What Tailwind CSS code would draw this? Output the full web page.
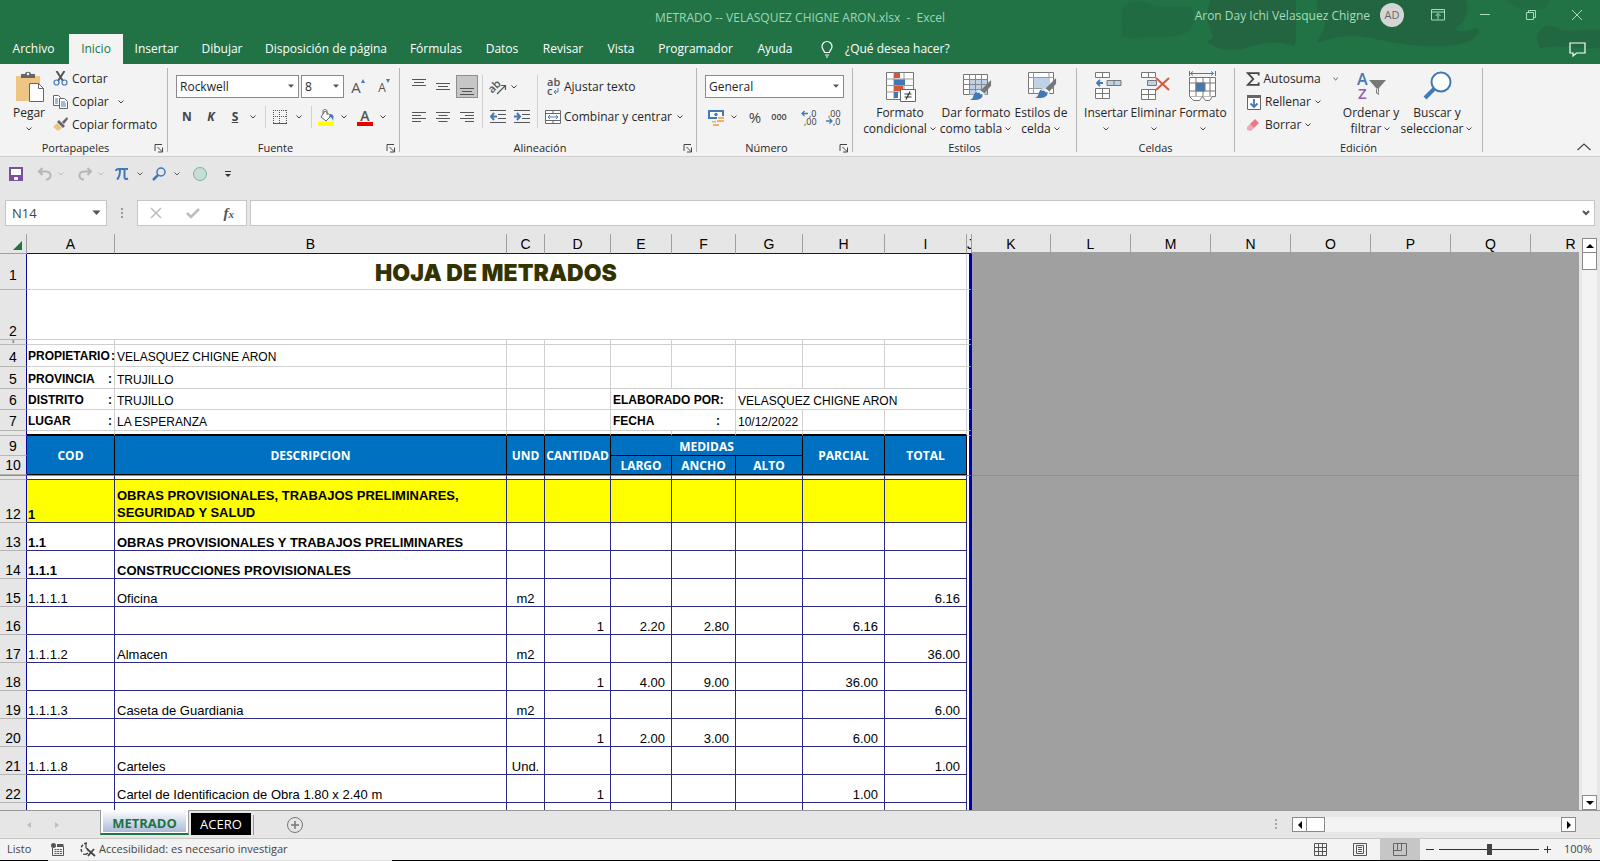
<!DOCTYPE html>
<html lang="es">
<head>
<meta charset="utf-8">
<meta name="viewport" content="width=device-width, initial-scale=1">
<title>METRADO -- VELASQUEZ CHIGNE ARON.xlsx - Excel</title>
<script src="https://cdn.jsdelivr.net/npm/@tailwindcss/browser@4"></script>
</head>
<body class="flex h-screen flex-col overflow-hidden bg-[#e6e6e6] font-['Open_Sans','Noto_Sans',sans-serif] text-[12px] text-[#262626]">

<svg class="hidden" aria-hidden="true">
  <symbol id="chev" viewBox="0 0 8 8"><path d="M1.500 2.500 4 5l2.500-2.500" fill="none" stroke="currentColor" stroke-width="1" opacity=".85"/></symbol>
  <symbol id="tri" viewBox="0 0 8 8"><path d="M1 2.500h6L4 5.800z" fill="currentColor"/></symbol>
  <symbol id="launch" viewBox="0 0 10 10"><path d="M1 8V1.500h7M3.500 4 8 8.500M8.500 4.500v4.500H4" fill="none" stroke="#444"/></symbol>
  <symbol id="brush" viewBox="0 0 24 24"><path d="M23 1v6l-7 8-4-3z" fill="#777"/><path d="M12 12l4 3c1 5-3 8-11 8-2 0-3-1-4-1 4-1 3-3 4-6 1-4 4-5 7-4z" fill="#f3f3f3"/><path d="M11 13l3 3c1 4-3 6-9 6-2 0-3 0-4-.500 4-1 3-3 4-5 1-3 3-4 6-3.500z" fill="#4179b5"/><path d="M8 14c2-1 4-1 5 2" stroke="#f3f3f3" stroke-width="1.500" fill="none"/></symbol>
</svg>

<!-- Title bar and ribbon tabs -->
<header class="relative flex h-16 shrink-0 flex-col bg-[#217346] text-white">
  <svg class="absolute right-0 top-0 h-16 w-[490px]" viewBox="0 0 490 64" aria-hidden="true">
    <g fill="#22633f"><path d="M14 6c10-8 24-4 32 0h34c6 10 4 20-2 26-16 8-34 4-50 6-8 2-14-2-17-2 4-8-3-20 3-30z" opacity=".5"/><path d="M100 0h86v40c0 4-2 6-2 7-14-8-30-4-46 0-14 6-34 2-41-6 8-2 6-6 3-12-4-10-3-20 0-29z" opacity=".85"/><path d="M208 0h148c4 12-2 24-12 30 8 2 14 2 22-2 8 2-2 14-16 16-30 6-60 0-90-6-20-4-32-2-53 5 2-10 12-14 6-24-6-6-8-12-5-19z" opacity=".8"/><path d="M395 0h44c2 8-6 8-12 10-10 0-26-2-32-10z" opacity=".4"/><path d="M428 32c8-10 18-6 22-2 14 2 30-2 40 0v18c-18 2-34-4-58 0-6-2-6-10-4-16z" opacity=".7"/></g>
  </svg>
  <div class="relative flex h-[34px] items-center">
    <div class="flex-1"></div>
    <h1 class="whitespace-pre pt-0.5 text-[12px] font-normal text-[#9fd5b7]">METRADO -- VELASQUEZ CHIGNE ARON.xlsx  -  Excel</h1>
    <div class="flex h-[30px] flex-1 items-center justify-end self-start text-[#a8dcbd]">
      <span class="mr-2.5 pt-0.5 text-[12px]">Aron Day Ichi Velasquez Chigne</span>
      <button class="mr-[10px] size-6 rounded-full bg-[#d5d5d5] text-[11px] text-[#666]">AD</button>
      <button class="grid w-12 place-items-center" aria-label="Opciones de la cinta"><svg class="h-3 w-[14px]" viewBox="0 0 14 12" fill="none" stroke="currentColor"><path d="M.5.5h13v10.500H.5zM.5 3h13M7 10V4.500M4.500 7 7 4.500 9.500 7"/></svg></button>
      <button class="grid w-[46px] place-items-center" aria-label="Minimizar"><svg class="h-3 w-3" viewBox="0 0 12 12" stroke="currentColor"><path d="M1 5.500h10"/></svg></button>
      <button class="grid w-[46px] place-items-center" aria-label="Restaurar"><svg class="h-3 w-3" viewBox="0 0 12 12" fill="none" stroke="currentColor"><path d="M1.500 3.500h7v7h-7zM3.500 3V1.500h7v7H9"/></svg></button>
      <button class="grid w-[46px] place-items-center" aria-label="Cerrar"><svg class="h-3 w-3" viewBox="0 0 12 12" stroke="currentColor"><path d="m1 1 10 10M11 1 1 11"/></svg></button>
    </div>
  </div>
  <nav class="relative flex h-[30px] items-stretch text-[12px] [&>button]:shrink-0 [&>button]:whitespace-nowrap">
    <button class="w-[67px]">Archivo</button>
    <button class="ml-0.5 w-[54px] bg-[#f3f3f3] text-[#217346]">Inicio</button>
    <button class="w-[67px]">Insertar</button>
    <button class="w-16">Dibujar</button>
    <button class="w-36">Disposición de página</button>
    <button class="w-[76px]">Fórmulas</button>
    <button class="w-14">Datos</button>
    <button class="w-[66px]">Revisar</button>
    <button class="w-[50px]">Vista</button>
    <button class="w-[99px]">Programador</button>
    <button class="w-[60px]">Ayuda</button>
    <button class="flex items-center gap-3 pl-4"><svg class="h-[18px] w-3" viewBox="0 0 12 18" fill="none" stroke="currentColor" stroke-width="1.200"><path d="M3.500 12.500c0-2-2.500-3-2.500-6a5 5 0 0 1 10 0c0 3-2.500 4-2.500 6zM4 15h4M5 17h2"/></svg>¿Qué desea hacer?</button>
    <button class="ml-auto grid w-[46px] place-items-center" aria-label="Comentarios"><svg class="h-[15px] w-[17px]" viewBox="0 0 17 15" fill="none" stroke="currentColor" stroke-width="1.200"><path d="M1 1h15v10H7.500L4 14v-3H1z"/></svg></button>
  </nav>
</header>

<!-- Ribbon -->
<section class="flex h-[93px] shrink-0 border-b border-[#cfcfcf] bg-[#f3f3f3] [&_button]:shrink-0 [&_button]:whitespace-nowrap">
  <div class="flex w-[167px] shrink-0 flex-col">
    <div class="flex h-[76px] pt-[3px]">
      <button class="ml-3 flex w-[34px] flex-col items-center pt-1">
        <svg class="h-8 w-8 shrink-0" viewBox="0 0 32 32"><path d="M3 5h24v25H3z" fill="#eec583"/><path d="M8 3h4c0-3 6-3 6 0h4v4H8z" fill="#666"/><circle cx="15" cy="3" r="1.300" fill="#f3f3f3"/><path d="M16.500 12.500h9l5 5v13h-14z" fill="#fff" stroke="#666"/><path d="M25.500 12.500v5h5" fill="none" stroke="#666"/></svg>
        <span class="leading-[20px]">Pegar</span>
        <svg class="mt-0.5 size-2"><use href="#chev"/></svg>
      </button>
      <div class="ml-[7px] flex flex-col [&>button]:flex [&>button]:h-[23px] [&>button]:items-center [&>button]:gap-1">
        <button><svg class="size-[15px]" viewBox="0 0 15 15" fill="none"><path d="M3.500 0 10 10M11.500 0 5 10" stroke="#555" stroke-width="2"/><circle cx="3.500" cy="11.500" r="2.500" stroke="#4179b5" stroke-width="1.200"/><circle cx="11.500" cy="11.500" r="2.500" stroke="#4179b5" stroke-width="1.200"/></svg>Cortar</button>
        <button><svg class="size-[15px]" viewBox="0 0 15 15" fill="#fff" stroke="#666"><path d="M.5 1.500h5l2 2v8h-7z"/><path d="M2 5h3M2 7h3M2 9h3" stroke="#4179b5"/><path d="M6.500 4.500h5l3 3v7h-8z"/><path d="M8 8h4M8 10h5M8 12h5" stroke="#4179b5"/></svg>Copiar<svg class="ml-1 size-2"><use href="#chev"/></svg></button>
        <button><svg class="size-[15px]" viewBox="0 0 15 15"><path d="M14 0 9 5l2 2 4-5z" fill="#666"/><path d="m6 3 6 6-2 2-6-6z" fill="#666"/><path d="m4 6 5 5-4 3-5-4z" fill="#eec583"/></svg>Copiar formato</button>
      </div>
    </div>
    <div class="flex h-4 items-center"><span class="flex-1 text-center text-[11px]">Portapapeles</span><button class="grid w-4 place-items-center" aria-label="Opciones de portapapeles"><svg class="size-2.5"><use href="#launch"/></svg></button></div>
  </div>
  <div class="my-1 w-px shrink-0 bg-[#b5b5b5]"></div>

  <div class="flex w-[231px] shrink-0 flex-col">
    <div class="flex h-[76px] flex-col gap-2 pt-[11px]">
      <div class="flex h-[23px] gap-0.5 pl-2">
        <div class="relative w-[123px] border border-[#8a8a8a] bg-white"><select aria-label="Fuente" class="size-full appearance-none pl-[3px] text-[12px] leading-none"><option>Rockwell</option></select><svg class="pointer-events-none absolute right-[3px] top-1.5 size-2 text-[#555]"><use href="#tri"/></svg></div>
        <div class="relative w-[43px] border border-[#8a8a8a] bg-white"><select aria-label="Tamaño" class="size-full appearance-none pl-[3px] text-[12px] leading-none"><option>8</option></select><svg class="pointer-events-none absolute right-[3px] top-1.5 size-2 text-[#555]"><use href="#tri"/></svg></div>
        <button class="flex w-6 items-start justify-center pt-0.5" aria-label="Aumentar tamaño"><span class="text-[15px] leading-5 text-[#555]">A</span><svg class="mt-0.5 size-1" viewBox="0 0 4 4"><path d="M0 4h4L2 0z" fill="#4179b5"/></svg></button>
        <button class="flex w-6 items-start justify-center pt-0.5" aria-label="Disminuir tamaño"><span class="pt-px text-[12px] leading-5 text-[#555]">A</span><svg class="mt-0.5 size-1" viewBox="0 0 4 4"><path d="M0 0h4L2 4z" fill="#4179b5"/></svg></button>
      </div>
      <div class="flex h-[22px] items-center pl-[7px] [&>button]:grid [&>button]:h-full [&>button]:place-items-center">
        <button class="w-6 font-bold text-[#444]">N</button>
        <button class="w-6 font-bold italic text-[#444]">K</button>
        <button class="w-6 font-bold text-[#444] underline">S</button>
        <button class="w-3" aria-label="Más subrayado"><svg class="size-2"><use href="#chev"/></svg></button>
        <i class="mx-1.5 h-full w-px bg-[#d0d0d0]"></i>
        <button class="w-4" aria-label="Bordes"><svg class="size-[14px]" viewBox="0 0 14 14" fill="none" stroke="#555"><path d="M.5 0v13M13.500 0v13M6.500 0v13M0 .5h14M0 6.500h14" stroke-dasharray="1 1"/><path d="M0 13.500h14"/></svg></button>
        <button class="w-[22px]" aria-label="Más bordes"><svg class="size-2"><use href="#chev"/></svg></button>
        <i class="mx-px h-full w-px bg-[#d0d0d0]"></i>
        <button class="ml-1 w-[18px]" aria-label="Color de relleno"><svg class="h-[17px] w-[17px]" viewBox="0 0 17 17"><path d="M0 12.500h16V17H0z" fill="#ff0"/><path d="m7 2 6 5-5 5-5-4z" fill="#fff" stroke="#666"/><path d="M5 5V2c0-2 4-2 4 0v4" fill="none" stroke="#666"/><path d="M12 5c4 0 4 3 3 7-1-3-1-4-4-4z" fill="#4179b5"/></svg></button>
        <button class="w-[18px]" aria-label="Más rellenos"><svg class="size-2"><use href="#chev"/></svg></button>
        <button class="w-6" aria-label="Color de fuente"><span class="flex w-4 flex-col items-center border-b-4 border-[#e60000] text-[14px] leading-[13px] font-semibold text-[#555]">A</span></button>
        <button class="w-3" aria-label="Más colores"><svg class="size-2"><use href="#chev"/></svg></button>
      </div>
    </div>
    <div class="flex h-4 items-center"><span class="flex-1 text-center text-[11px]">Fuente</span><button class="grid w-4 place-items-center" aria-label="Opciones de fuente"><svg class="size-2.5"><use href="#launch"/></svg></button></div>
  </div>
  <div class="my-1 w-px shrink-0 bg-[#b5b5b5]"></div>

  <div class="flex w-[296px] shrink-0 flex-col">
    <div class="flex h-[76px] pt-[11px]">
      <div class="grid h-[53px] grid-cols-3 grid-rows-[23px_22px] gap-x-0.5 gap-y-2 pl-2 [&>button]:grid [&>button]:w-[22px] [&>button]:place-items-center [&_svg]:h-[22px] [&_svg]:w-[14px] [&_svg]:stroke-[#555]">
        <button aria-label="Alinear arriba"><svg viewBox="0 0 14 22"><path d="M0 3.500h14M2 6.500h10M0 9.500h14"/></svg></button>
        <button aria-label="Alinear al medio"><svg viewBox="0 0 14 22"><path d="M0 7.500h14M2 10.500h10M0 13.500h14"/></svg></button>
        <button class="border border-[#8f8f8f] bg-[#c6c6c6]" aria-label="Alinear abajo"><svg viewBox="0 0 14 22"><path d="M0 12.500h14M2 15.500h10M0 18.500h14"/></svg></button>
        <button aria-label="Izquierda"><svg viewBox="0 0 14 22"><path d="M0 6.500h14M0 9.500h9M0 12.500h14M0 15.500h9"/></svg></button>
        <button aria-label="Centrar"><svg viewBox="0 0 14 22"><path d="M0 6.500h14M2.500 9.500h9M0 12.500h14M2.500 15.500h9"/></svg></button>
        <button aria-label="Derecha"><svg viewBox="0 0 14 22"><path d="M0 6.500h14M5 9.500h9M0 12.500h14M5 15.500h9"/></svg></button>
      </div>
      <i class="ml-1 h-[53px] w-px bg-[#d0d0d0]"></i>
      <div class="flex w-[54px] flex-col gap-2">
        <div class="flex h-[23px] items-center pl-[7px]">
          <button aria-label="Orientación"><svg class="size-4 overflow-visible" viewBox="0 0 16 16"><text x="-1" y="11" font-size="11" font-weight="600" fill="#555" transform="rotate(-45 5 9)">ab</text><path d="m7 15 8-8M11 6.500h4.500V11" fill="none" stroke="#555" stroke-width="1.200"/></svg></button>
          <button class="grid w-4 place-items-center" aria-label="Más orientación"><svg class="size-2"><use href="#chev"/></svg></button>
        </div>
        <div class="flex h-[22px] items-center pl-[3px] [&>button]:grid [&>button]:w-6 [&>button]:place-items-center">
          <button aria-label="Disminuir sangría"><svg class="h-[14px] w-4" viewBox="0 0 16 14"><path d="M0 .5h16M8 4.500h8M8 8.500h8M0 12.500h16" stroke="#555"/><path d="M7 6.500H2M4 3 1 6.500 4 10" fill="none" stroke="#4179b5" stroke-width="2"/></svg></button>
          <button aria-label="Aumentar sangría"><svg class="h-[14px] w-4" viewBox="0 0 16 14"><path d="M0 .5h16M8 4.500h8M8 8.500h8M0 12.500h16" stroke="#555"/><path d="M0 6.500h5M3 3l3 3.500L3 10" fill="none" stroke="#4179b5" stroke-width="2"/></svg></button>
        </div>
      </div>
      <i class="h-[53px] w-px bg-[#d0d0d0]"></i>
      <div class="flex flex-col gap-2 pl-[7px]">
        <button class="flex h-[23px] items-center gap-[3px]"><svg class="size-4 overflow-visible" viewBox="0 0 16 16"><text x="2" y="7" font-size="11" font-weight="600" fill="#555">ab</text><text x="2" y="16" font-size="11" font-weight="600" fill="#555">c</text><path d="M13 9v4H9M11 11l-2 2 2 2" fill="none" stroke="#4179b5"/></svg>Ajustar texto</button>
        <div class="flex h-[22px] items-center">
          <button class="flex w-[127px] items-center gap-[3px]"><svg class="size-4" viewBox="0 0 16 16" fill="#fff" stroke="#666"><path d="M.5 1.500h15v13H.5zM.5 4.500h15M.5 11.500h15M8 1.500v3M8 11.500v3"/><path d="M3 8h10M5 6 3 8l2 2M11 6l2 2-2 2" fill="none" stroke="#4179b5"/></svg>Combinar y centrar</button>
          <button class="grid w-4 place-items-center" aria-label="Más combinar"><svg class="size-2"><use href="#chev"/></svg></button>
        </div>
      </div>
    </div>
    <div class="flex h-4 items-center"><span class="flex-1 text-center text-[11px]">Alineación</span><button class="grid w-4 place-items-center" aria-label="Opciones de alineación"><svg class="size-2.5"><use href="#launch"/></svg></button></div>
  </div>
  <div class="my-1 w-px shrink-0 bg-[#b5b5b5]"></div>

  <div class="flex w-[155px] shrink-0 flex-col">
    <div class="flex h-[76px] flex-col gap-2 px-2 pt-[11px]">
      <div class="relative h-[23px] border border-[#8a8a8a] bg-white"><select aria-label="Formato de número" class="size-full appearance-none pl-[3px] text-[12px] leading-none"><option>General</option></select><svg class="pointer-events-none absolute right-[3px] top-1.5 size-2 text-[#555]"><use href="#tri"/></svg></div>
      <div class="flex h-[22px] items-center pl-[3px] [&>button]:grid [&>button]:h-full [&>button]:place-items-center">
        <button class="w-[17px]" aria-label="Moneda"><svg class="h-[17px] w-[17px]" viewBox="0 0 17 17"><path d="M1 2h14v7H1z" fill="#fff" stroke="#4179b5" stroke-width="2"/><circle cx="8" cy="5.500" r="1.700" fill="#4179b5"/><path d="M9 7h8v10H4v-6h5z" fill="#f3f3f3"/><path d="M10 8h6v2h-6zM9 11h7v2H9zM4 12h4v1.500H4zM5 15h6v2H5z" fill="#eeb36a"/></svg></button>
        <button class="w-[18px]" aria-label="Más monedas"><svg class="size-2"><use href="#chev"/></svg></button>
        <button class="w-6 text-[15px] text-[#444]">%</button>
        <button class="w-6 text-[9px] font-semibold text-[#444]">000</button>
        <i class="mx-px h-full w-px bg-[#d0d0d0]"></i>
        <button class="ml-1 w-6" aria-label="Aumentar decimales"><svg class="h-[15px] w-[15px] overflow-visible" viewBox="0 0 15 15"><text x="7" y="7" font-size="9" fill="#333">,0</text><text x="2" y="15" font-size="9" fill="#333">,00</text><path d="M6 3.500H0M2.500 1 0 3.500 2.500 6" fill="none" stroke="#4179b5" stroke-width="1.300"/></svg></button>
        <button class="w-6" aria-label="Disminuir decimales"><svg class="h-[15px] w-[15px] overflow-visible" viewBox="0 0 15 15"><text x="2" y="7" font-size="9" fill="#333">,00</text><text x="7" y="15" font-size="9" fill="#333">,0</text><path d="M0 11h6M3.500 8.500 6 11l-2.500 2.500" fill="none" stroke="#4179b5" stroke-width="1.300"/></svg></button>
      </div>
    </div>
    <div class="flex h-4 items-center"><span class="flex-1 text-center text-[11px]">Número</span><button class="grid w-4 place-items-center" aria-label="Opciones de número"><svg class="size-2.5"><use href="#launch"/></svg></button></div>
  </div>
  <div class="my-1 w-px shrink-0 bg-[#b5b5b5]"></div>

  <div class="flex w-[223px] shrink-0 flex-col">
    <div class="flex h-[76px] pl-2 pt-[7px] leading-4 [&>button]:flex [&>button]:flex-col [&>button]:items-center [&>button>svg]:mb-0.5 [&>button>svg]:size-8 [&>button>svg]:shrink-0 [&_span]:flex [&_span]:items-center [&_span]:gap-0.5">
      <button class="w-[78px]"><svg viewBox="0 0 32 32"><path d="M2.500 1.500h27v27h-27z" fill="#fff" stroke="#777"/><path d="M2.500 8h27M2.500 14.500h27M2.500 21h27M10 1.500v27M20 1.500v27" stroke="#999"/><path d="M10 2h6v5h-6zM10 15h9v5h-9z" fill="#d65532"/><path d="M10 8.500h11v5.500H10zM10 21h4v6h-4z" fill="#4179b5"/><path d="M16.500 18.500h15v12h-15z" fill="#fff" stroke="#666"/><path d="M20.500 23h7M20.500 26h7M26 20.500l-4 8" stroke="#333" stroke-width="1.200"/></svg>Formato<span>condicional<svg class="size-2"><use href="#chev"/></svg></span></button>
      <button class="w-[74px]"><svg viewBox="0 0 32 32"><path d="M3.500 3.500h24v20h-24z" fill="#fff" stroke="#777"/><path d="M9 8.500h18v15H9z" fill="#bfd1e6"/><path d="M3.500 8.500h24M3.500 13.500h24M3.500 18.500h24M9.500 3.500v20M15.500 3.500v20M21.500 3.500v20" stroke="#888"/><use href="#brush" x="9" y="8" width="23" height="23"/></svg>Dar formato<span>como tabla<svg class="size-2"><use href="#chev"/></svg></span></button>
      <button class="w-[56px]"><svg viewBox="0 0 32 32"><path d="M3.500 1.500h25v21h-25z" fill="#fff" stroke="#777"/><path d="M3.500 6.500h25M3.500 17.500h25M8.500 1.500v21M24 1.500v21" stroke="#999"/><path d="M9 7h15v10H9z" fill="#bfd1e6"/><use href="#brush" x="9" y="6" width="23" height="23"/></svg>Estilos de<span>celda<svg class="size-2"><use href="#chev"/></svg></span></button>
    </div>
    <div class="h-4 text-center text-[11px] leading-4">Estilos</div>
  </div>
  <div class="my-1 w-px shrink-0 bg-[#b5b5b5]"></div>

  <div class="flex w-[157px] shrink-0 flex-col">
    <div class="flex h-[76px] pl-1.5 pt-[7px] leading-4 [&>button]:flex [&>button]:flex-col [&>button]:items-center [&>button>svg]:shrink-0">
      <button class="w-[46px]"><svg class="mb-0.5 size-8" viewBox="0 0 32 32" fill="#fff" stroke="#777"><path d="M5.500 1.500h14v5h-14zM12.500 1.500v5M5.500 17.500h14v10h-14zM12.500 17.500v10M5.500 22.500h14"/><path d="M17 9.500h14v5H17zM24 9.500v5" fill="#bfd1e6"/><path d="M13 12H7M10 9l-3 3 3 3" fill="none" stroke="#4179b5" stroke-width="1.800"/></svg>Insertar<svg class="mt-1 size-2"><use href="#chev"/></svg></button>
      <button class="w-[49px]"><svg class="mb-0.5 size-8" viewBox="0 0 32 32" fill="#fff" stroke="#777"><path d="M3.500 1.500h14v5h-14zM10.500 1.500v5M3.500 18.500h14v10h-14zM10.500 18.500v10M3.500 23.500h14"/><path d="M9.500 9.500h9v5h-9z" fill="#bfd1e6"/><path d="m18 7 13 12M31 7 18 19" fill="none" stroke="#d9573c" stroke-width="2"/></svg>Eliminar<svg class="mt-1 size-2"><use href="#chev"/></svg></button>
      <button class="w-[50px]"><svg class="mb-0.5 size-8" viewBox="0 0 32 32" fill="#fff" stroke="#777"><path d="M2.500 6.500h26v19h-26z"/><path d="M2.500 12h26M2.500 20h26M9 6.500v19M16 6.500v19M23 6.500v19"/><path d="M9 12h9v8H9z" fill="#4179b5"/><path d="m2.500 25.500 4 4h6l3-4 3 4h4l3-4"/><path d="M2.500 0v5M28.500 0v5M3 2.500h24M6 .5l-2.500 2L6 4.500M24 .5l2.500 2-2.500 2" fill="none" stroke="#4179b5"/></svg>Formato<svg class="mt-1 size-2"><use href="#chev"/></svg></button>
    </div>
    <div class="h-4 text-center text-[11px] leading-4">Celdas</div>
  </div>
  <div class="my-1 w-px shrink-0 bg-[#b5b5b5]"></div>

  <div class="flex w-[247px] shrink-0 flex-col">
    <div class="flex h-[76px]">
      <div class="flex w-[104px] flex-col pl-[11px] pt-[3px] [&>button]:flex [&>button]:h-[23px] [&>button]:items-center [&>button]:gap-[3px]">
        <button><svg class="size-4" viewBox="0 0 16 16"><path d="M14 4V1.500H2L8 8l-6 6.500h12V12" fill="none" stroke="#444" stroke-width="2"/></svg>Autosuma<svg class="ml-2 size-2"><use href="#chev"/></svg></button>
        <button><svg class="size-4" viewBox="0 0 16 16"><path d="M1.500 1.500h13v14h-13z" fill="#fff" stroke="#666"/><path d="M1 1h14v3H1z" fill="#666"/><path d="M8 5v8M4.500 9.500 8 13l3.500-3.500" fill="none" stroke="#4179b5" stroke-width="1.800"/></svg>Rellenar<svg class="size-2"><use href="#chev"/></svg></button>
        <button><svg class="size-4" viewBox="0 0 16 16"><path d="m9 2 4 4-5 5-4-4z" fill="#e8788a"/><path d="m4 7 4 4-3 3-4-1v-3z" fill="#e8788a" opacity=".6"/></svg>Borrar<svg class="size-2"><use href="#chev"/></svg></button>
      </div>
      <div class="flex pt-[7px] leading-4 [&>button]:flex [&>button]:flex-col [&>button]:items-center [&>button>svg]:mb-0.5 [&>button>svg]:size-8 [&>button>svg]:shrink-0 [&_span]:flex [&_span]:items-center [&_span]:gap-0.5">
        <button class="w-16"><svg class="overflow-visible" viewBox="0 0 32 32"><text x="2" y="14" font-size="16" font-weight="600" fill="#4179b5">A</text><text x="3" y="28" font-size="15" font-weight="600" fill="#9160b0">Z</text><path d="M14 9h17l-7 8v7l-3-2v-5z" fill="#777"/><path d="m22 17 1 5" stroke="#fff"/></svg>Ordenar y<span>filtrar<svg class="size-2"><use href="#chev"/></svg></span></button>
        <button class="w-[68px]"><svg viewBox="0 0 32 32" fill="none" stroke="#4179b5"><circle cx="20" cy="11" r="9.500" stroke-width="2" fill="#fff"/><path d="M13 18 4 27" stroke-width="4"/></svg>Buscar y<span>seleccionar<svg class="size-2"><use href="#chev"/></svg></span></button>
      </div>
    </div>
    <div class="h-4 text-center text-[11px] leading-4">Edición</div>
  </div>
  <div class="my-1 w-px shrink-0 bg-[#b5b5b5]"></div>
  <button class="ml-auto mr-2 self-end pb-1" aria-label="Contraer la cinta"><svg class="h-2.5 w-4" viewBox="0 0 16 10" fill="none" stroke="#444" stroke-width="1.200"><path d="m1.500 8 6.500-6 6.500 6"/></svg></button>
</section>

<!-- Quick access toolbar -->
<div class="flex h-[34px] shrink-0 items-center pl-2 text-[#444] [&>button]:grid [&>button]:h-6 [&>button]:place-items-center">
  <button class="w-4" aria-label="Guardar"><svg class="size-[14px]" viewBox="0 0 14 14"><path d="M1 1h12v12H1z" fill="#fff" stroke="#7a4fa0" stroke-width="2"/><path d="M1 8h12v5H1z" fill="#7a4fa0"/><path d="M5 10h4v3H5z" fill="#fff"/></svg></button>
  <button class="ml-3 w-[18px] text-[#b5b5b5]" aria-label="Deshacer"><svg class="h-[14px] w-4" viewBox="0 0 16 14" fill="none" stroke="currentColor" stroke-width="2"><path d="M5.500 1 2 4.500 5.500 8M2 4.500h7c6 0 6 8 0 8"/></svg></button>
  <button class="w-[14px] text-[#b5b5b5]" aria-label="Más deshacer"><svg class="size-2"><use href="#chev"/></svg></button>
  <button class="ml-2 w-[18px] text-[#b5b5b5]" aria-label="Rehacer"><svg class="h-[14px] w-4" viewBox="0 0 16 14" fill="none" stroke="currentColor" stroke-width="2"><path d="M10.500 1 14 4.500 10.500 8M14 4.500H7c-6 0-6 8 0 8"/></svg></button>
  <button class="w-[14px] text-[#b5b5b5]" aria-label="Más rehacer"><svg class="size-2"><use href="#chev"/></svg></button>
  <button class="ml-1.5 w-4" aria-label="Ecuación"><svg class="size-[14px]" viewBox="0 0 14 14" fill="none" stroke="#4179b5" stroke-width="2"><path d="M1 4c0-2 1-2 3-2h9M5 2.500c0 5-.5 8-3 10M9.500 2.500V10c0 2 1 2.500 3.500 1.500"/></svg></button>
  <button class="w-5" aria-label="Más ecuaciones"><svg class="size-2"><use href="#chev"/></svg></button>
  <button class="w-[18px]" aria-label="Buscar"><svg class="size-[14px]" viewBox="0 0 14 14" fill="none" stroke="#4179b5"><circle cx="9" cy="5" r="4" stroke-width="1.500"/><path d="M6 8 1 13" stroke-width="2.500"/></svg></button>
  <button class="w-[18px]" aria-label="Más buscar"><svg class="size-2"><use href="#chev"/></svg></button>
  <button class="ml-1.5 w-4" aria-label="Elipse"><svg class="size-[14px]" viewBox="0 0 14 14"><circle cx="7" cy="7" r="6.500" fill="#c5ddd4" stroke="#79b39b"/></svg></button>
  <button class="ml-3 w-4" aria-label="Personalizar"><svg class="size-2" viewBox="0 0 8 8"><path d="M1 1.500h6" stroke="#333"/><path d="M1 4h6L4 7z" fill="#333"/></svg></button>
</div>

<!-- Formula bar -->
<div class="mt-[9px] flex h-[26px] shrink-0 items-stretch px-[5px] [&>*]:shrink-0">
  <div class="relative w-[102px] border border-[#c6c6c6] bg-white"><input aria-label="Cuadro de nombres" value="N14" class="size-full pl-1.5 text-[13px] text-[#444] outline-none"><svg class="pointer-events-none absolute right-1 top-1.5 size-[11px] text-[#555]"><use href="#tri"/></svg></div>
  <svg class="ml-[13px] w-1" viewBox="0 0 4 26" fill="#999"><path d="M1 8h2v2H1zM1 12h2v2H1zM1 16h2v2H1z"/></svg>
  <div class="ml-[13px] flex w-[110px] items-center justify-around border border-[#c6c6c6] bg-white">
    <button aria-label="Cancelar"><svg class="size-3" viewBox="0 0 12 12" stroke="#bdbdbd" stroke-width="1.500"><path d="m1 1 10 10M11 1 1 11"/></svg></button>
    <button aria-label="Introducir"><svg class="h-3 w-[14px]" viewBox="0 0 14 12" fill="none" stroke="#bdbdbd" stroke-width="2.500"><path d="m1 6 4 4 8-8"/></svg></button>
    <button class="font-['Liberation_Serif',serif] text-[15px] font-bold italic leading-4 text-[#555]" aria-label="Insertar función">f<span class="text-[11px]">x</span></button>
  </div>
  <div class="ml-[3px] flex min-w-0 flex-1! items-center border border-[#c6c6c6] bg-white"><input aria-label="Barra de fórmulas" class="h-full min-w-0 flex-1 outline-none"><button class="px-1" aria-label="Expandir"><svg class="size-2" viewBox="0 0 8 8"><path d="m1 2 3 3 3-3" fill="none" stroke="#555" stroke-width="2"/></svg></button></div>
</div>

<!-- Worksheet -->
<main class="mt-2 flex min-h-0 flex-1 overflow-hidden">
  <div class="min-w-0 flex-1 overflow-hidden bg-[#a0a0a0]">
    <table class="w-full table-fixed border-separate border-spacing-0 font-['Liberation_Sans',Arial,sans-serif] text-[13px] leading-[15px] text-black [&_td]:p-0 [&_th]:p-0">
      <colgroup><col class="w-[27px]"><col class="w-[88px]"><col class="w-[392px]"><col class="w-[38px]"><col class="w-[66px]"><col class="w-[61px]"><col class="w-[64px]"><col class="w-[67px]"><col class="w-[82px]"><col class="w-[82px]"><col class="w-[5px]"><col class="w-[79px]"><col class="w-[80px]"><col class="w-[80px]"><col class="w-[80px]"><col class="w-[80px]"><col class="w-[80px]"><col class="w-[80px]"><col></colgroup>
      <thead class="[&_th]:border-b [&_th]:border-r [&_th]:border-b-[#0a0a9a] [&_th]:border-r-[#9f9f9f] [&_th]:bg-[#e6e6e6] [&_th]:pb-px [&_th]:align-bottom [&_th]:text-[14px] [&_th]:font-normal [&_th]:leading-[15px]">
        <tr class="h-5">
          <th class="border-b-[#9f9f9f]!"><svg class="mb-0.5 ml-[13px] size-[9px]" viewBox="0 0 9 9"><path d="M9 0v9H0z" fill="#217346"/></svg></th>
          <th>A</th><th>B</th><th>C</th><th>D</th><th>E</th><th>F</th><th>G</th><th>H</th><th>I</th>
          <th><div class="h-[15px] w-1 overflow-hidden">J</div></th>
          <th class="border-b-2! border-b-[#a0a0a0]! pb-0!">K</th><th class="border-b-2! border-b-[#a0a0a0]! pb-0!">L</th><th class="border-b-2! border-b-[#a0a0a0]! pb-0!">M</th><th class="border-b-2! border-b-[#a0a0a0]! pb-0!">N</th><th class="border-b-2! border-b-[#a0a0a0]! pb-0!">O</th><th class="border-b-2! border-b-[#a0a0a0]! pb-0!">P</th><th class="border-b-2! border-b-[#a0a0a0]! pb-0!">Q</th><th class="border-b-2! border-r-0! border-b-[#a0a0a0]! pb-0! pl-[31px]!">R</th>
        </tr>
      </thead>
      <tbody class="[&_td]:border-b [&_td]:border-r [&_td]:border-[#d0d0d0] [&_td]:bg-white [&_td]:px-0.5 [&_td]:align-bottom [&_td]:whitespace-nowrap [&_td]:text-[12px] [&_td:nth-child(2)]:pl-px [&_td:last-child]:border-r-3 [&_td:last-child]:border-r-[#0000b4] [&_td:last-child]:p-0 [&_th]:border-b [&_th]:border-r [&_th]:border-b-[#b5b5b5] [&_th]:border-r-[#0a0a9a] [&_th]:bg-[#e6e6e6] [&_th]:align-bottom [&_th]:text-[14px] [&_th]:font-normal">
        <tr class="h-9"><th class="pb-1.5!">1</th><td colspan="9" class="pt-0.5! text-center align-middle! font-['Inter',sans-serif] text-[23px]! leading-7 font-black text-[#333300]">HOJA DE METRADOS</td><td></td></tr>
        <tr class="h-[50px]"><th>2</th><td colspan="9"></td><td></td></tr>
        <tr class="h-[5px]"><th><div class="h-1 overflow-hidden text-[4px] leading-1">3</div></th><td></td><td></td><td></td><td></td><td></td><td></td><td></td><td></td><td></td><td></td></tr>
        <tr class="h-[22px]"><th class="pb-px!">4</th><td class="pb-0.5!"><div class="flex w-[87px] justify-between font-bold"><span>PROPIETARIO</span><span>:</span></div></td><td class="pb-px!">VELASQUEZ CHIGNE ARON</td><td></td><td></td><td></td><td></td><td></td><td></td><td></td><td></td></tr>
        <tr class="h-[22px]"><th class="pb-px!">5</th><td class="pb-px!"><div class="flex w-[84px] justify-between font-bold"><span>PROVINCIA</span><span>:</span></div></td><td>TRUJILLO</td><td></td><td></td><td></td><td></td><td></td><td></td><td></td><td></td></tr>
        <tr class="h-[21px]"><th class="pb-px!">6</th><td class="pb-px!"><div class="flex w-[84px] justify-between font-bold"><span>DISTRITO</span><span>:</span></div></td><td>TRUJILLO</td><td></td><td></td><td colspan="2" class="pb-px!"><div class="flex w-[107px] justify-between font-bold"><span>ELABORADO POR</span><span>:</span></div></td><td colspan="3">VELASQUEZ CHIGNE ARON</td><td></td></tr>
        <tr class="h-[21px]"><th class="pb-px!">7</th><td class="pb-px!"><div class="flex w-[84px] justify-between font-bold"><span>LUGAR</span><span>:</span></div></td><td>LA ESPERANZA</td><td></td><td></td><td colspan="2" class="pb-px!"><div class="flex w-[107px] justify-between font-bold"><span>FECHA</span><span>:</span></div></td><td>10/12/2022</td><td></td><td></td><td></td></tr>
        <tr class="h-[5px] [&>td:not(:last-child)]:border-b-2 [&>td:not(:last-child)]:border-b-black"><th></th><td></td><td></td><td></td><td></td><td></td><td></td><td></td><td></td><td></td><td></td></tr>
      </tbody>
      <tbody class="font-['Open_Sans','Noto_Sans',sans-serif] [&_td]:border-b [&_td]:border-r [&_td]:border-black [&_td]:bg-[#0070c0] [&_td]:text-center [&_td]:text-[12px] [&_td]:font-bold [&_td]:text-white [&_td:last-child]:border-b-0 [&_td:last-child]:border-r-3 [&_td:last-child]:border-r-[#0000b4] [&_td:last-child]:bg-white [&_th]:border-b [&_th]:border-r [&_th]:border-b-[#b5b5b5] [&_th]:border-r-[#0a0a9a] [&_th]:bg-[#e6e6e6] [&_th]:font-['Liberation_Sans',Arial,sans-serif] [&_th]:text-[14px] [&_th]:font-normal">
        <tr class="h-5"><th class="pt-0.5!">9</th><td rowspan="2">COD</td><td rowspan="2">DESCRIPCION</td><td rowspan="2">UND</td><td rowspan="2">CANTIDAD</td><td colspan="3" class="pt-0.5!">MEDIDAS</td><td rowspan="2">PARCIAL</td><td rowspan="2">TOTAL</td><td></td></tr>
        <tr class="h-[19px]"><th>10</th><td>LARGO</td><td>ANCHO</td><td>ALTO</td><td></td></tr>
      </tbody>
      <tbody class="[&_td]:border-b [&_td]:border-r [&_td]:border-[#2b2b86] [&_td]:px-0.5 [&_td]:align-bottom [&_td:nth-child(2)]:pl-px [&_td:nth-child(4)]:text-center [&_td:nth-child(n+5)]:pr-1.5 [&_td:nth-child(n+5)]:text-right [&_td:nth-child(11)]:border-b-0 [&_td:nth-child(11)]:border-r-3 [&_td:nth-child(11)]:border-r-[#0000b4] [&_td:nth-child(11)]:bg-white [&_td:nth-child(11)]:p-0 [&_th]:border-b [&_th]:border-r [&_th]:border-b-[#b5b5b5] [&_th]:border-r-[#0a0a9a] [&_th]:bg-[#e6e6e6] [&_th]:align-bottom [&_th]:text-[14px] [&_th]:font-normal [&_th]:leading-[15px]">
        <tr class="h-[5px] [&>td]:border-t [&>td]:border-t-[#8f8f8f] [&>td:nth-child(-n+11)]:bg-white"><th class="border-t border-t-[#8f8f8f]"></th><td></td><td></td><td></td><td></td><td></td><td></td><td></td><td></td><td></td><td></td><td colspan="8" class="border-r-0! border-b-0!"></td></tr>
        <tr class="h-[43px] font-bold [&>td:not(:last-child)]:bg-[#ffff00]"><th>12</th><td>1</td><td class="pb-px! leading-[17px]">OBRAS PROVISIONALES, TRABAJOS PRELIMINARES,<br>SEGURIDAD Y SALUD</td><td></td><td></td><td></td><td></td><td></td><td></td><td></td><td></td></tr>
        <tr class="h-7 bg-white font-bold"><th>13</th><td>1.1</td><td>OBRAS PROVISIONALES Y TRABAJOS PRELIMINARES</td><td></td><td></td><td></td><td></td><td></td><td></td><td></td><td></td></tr>
        <tr class="h-7 bg-white font-bold"><th>14</th><td>1.1.1</td><td>CONSTRUCCIONES PROVISIONALES</td><td></td><td></td><td></td><td></td><td></td><td></td><td></td><td></td></tr>
        <tr class="h-7 bg-white"><th>15</th><td>1.1.1.1</td><td>Oficina</td><td>m2</td><td></td><td></td><td></td><td></td><td></td><td>6.16</td><td></td></tr>
        <tr class="h-7 bg-white"><th>16</th><td></td><td></td><td></td><td>1</td><td>2.20</td><td>2.80</td><td></td><td>6.16</td><td></td><td></td></tr>
        <tr class="h-7 bg-white"><th>17</th><td>1.1.1.2</td><td>Almacen</td><td>m2</td><td></td><td></td><td></td><td></td><td></td><td>36.00</td><td></td></tr>
        <tr class="h-7 bg-white"><th>18</th><td></td><td></td><td></td><td>1</td><td>4.00</td><td>9.00</td><td></td><td>36.00</td><td></td><td></td></tr>
        <tr class="h-7 bg-white"><th>19</th><td>1.1.1.3</td><td>Caseta de Guardiania</td><td>m2</td><td></td><td></td><td></td><td></td><td></td><td>6.00</td><td></td></tr>
        <tr class="h-7 bg-white"><th>20</th><td></td><td></td><td></td><td>1</td><td>2.00</td><td>3.00</td><td></td><td>6.00</td><td></td><td></td></tr>
        <tr class="h-7 bg-white"><th>21</th><td>1.1.1.8</td><td>Carteles</td><td>Und.</td><td></td><td></td><td></td><td></td><td></td><td>1.00</td><td></td></tr>
        <tr class="h-7 bg-white"><th>22</th><td></td><td>Cartel de Identificacion de Obra 1.80 x 2.40 m</td><td></td><td>1</td><td></td><td></td><td></td><td>1.00</td><td></td><td></td></tr>
        <tr class="h-7 bg-white"><th></th><td></td><td></td><td></td><td></td><td></td><td></td><td></td><td></td><td></td><td></td></tr>
      </tbody>
    </table>
  </div>
  <div class="flex w-[21px] shrink-0 flex-col items-center pt-1">
    <button class="grid size-[15px] place-items-center border border-[#8a8a8a] bg-white" aria-label="Arriba"><svg class="size-2" viewBox="0 0 8 8"><path d="M0 6h8L4 2z"/></svg></button>
    <div class="flex w-[15px] flex-1 flex-col bg-[#f3f3f3]"><div class="h-[17px] border border-t-0 border-[#8a8a8a] bg-white"></div></div>
    <button class="grid size-[15px] place-items-center border border-[#8a8a8a] bg-white" aria-label="Abajo"><svg class="size-2" viewBox="0 0 8 8"><path d="M0 2h8L4 6z"/></svg></button>
  </div>
</main>

<!-- Sheet tabs and horizontal scroll bar -->
<footer class="shrink-0">
  <div class="flex h-7 items-start">
    <div class="flex h-7 w-[100px] items-center gap-5 border-t border-[#999] pl-[25px] text-[#bdbdbd]">
      <button aria-label="Hoja anterior"><svg class="size-2" viewBox="0 0 8 8"><path d="M6 1v6L2 4z" fill="currentColor"/></svg></button>
      <button aria-label="Hoja siguiente"><svg class="size-2" viewBox="0 0 8 8"><path d="M2 1v6l4-3z" fill="currentColor"/></svg></button>
    </div>
    <button class="h-[25px] w-[89px] border-b-2 border-l border-r border-b-[#217346] border-l-[#999] border-r-[#999] bg-linear-to-b from-white to-[#a9b8d6] pt-0.5 text-[13px] font-bold leading-5 text-[#217346] shadow-[inset_0_-1px_0_#fff,inset_2px_0_0_#fff,inset_-2px_0_0_#fff]">METRADO</button>
    <div class="flex h-7 flex-1 border-t border-[#999]">
      <button class="ml-0.5 mt-0.5 h-[22px] w-[60px] bg-black text-[13px] leading-5 text-white">ACERO</button>
      <i class="ml-0.5 mt-1 h-5 w-px bg-[#999]"></i>
      <button class="ml-[33px] self-center" aria-label="Hoja nueva"><svg class="size-4" viewBox="0 0 16 16" fill="none" stroke="#777"><circle cx="8" cy="8" r="7.500"/><path d="M8 4v8M4 8h8" stroke-width="1.500"/></svg></button>
      <svg class="ml-auto h-[27px] w-1" viewBox="0 0 4 27" fill="#a5a5a5"><path d="M1 8h2v2H1zM1 12h2v2H1zM1 16h2v2H1z"/></svg>
      <div class="ml-[14px] mr-6 mt-1.5 flex h-[15px] w-[284px] bg-[#f3f3f3]">
        <button class="grid w-[15px] place-items-center border border-[#8a8a8a] bg-white" aria-label="Izquierda"><svg class="size-2" viewBox="0 0 8 8"><path d="M6 0v8L2 4z"/></svg></button>
        <div class="w-[18px] border border-l-0 border-[#8a8a8a] bg-white"></div>
        <button class="ml-auto grid w-[15px] place-items-center border border-[#8a8a8a] bg-white" aria-label="Derecha"><svg class="size-2" viewBox="0 0 8 8"><path d="M2 0v8l4-4z"/></svg></button>
      </div>
    </div>
  </div>
  <!-- Status bar -->
  <div class="flex h-[22px] items-center border-t border-[#c6c6c6] bg-[#f3f3f3] text-[11px] text-[#444]">
    <span class="w-[45px] pl-[7px]">Listo</span>
    <button class="ml-[6px]" aria-label="Grabar macro"><svg class="h-[13px] w-[13px]" viewBox="0 0 13 13" fill="none" stroke="#555"><path d="M1.500 5v7.500h11v-9M12.500 3.500H6"/><path d="M3.500 6.500h7.500M3.500 8.500h7.500M3.500 10.500h7.500" stroke-dasharray="2 .7"/><path d="M6 2h6.500" stroke-width="2"/><circle cx="2.500" cy="2.500" r="2.500" fill="#555" stroke="none"/></svg></button>
    <button class="ml-[16px] flex items-center gap-[3px]"><svg class="h-[15px] w-4" viewBox="0 0 16 15" fill="none" stroke="#444"><path d="M7 1a6 6 0 0 0-5 9" stroke-dasharray="3 1.500" stroke-width="1.500"/><path d="M3 12c3 1 4 0 5-1M6 1v5l2 1" stroke-width="1.200"/><path d="m7 7 8 7M14 7l-6 7" stroke-width="1.800"/></svg>Accesibilidad: es necesario investigar</button>
    <div class="ml-auto flex h-full items-center [&>button]:grid [&>button]:h-full [&>button]:place-items-center">
      <button class="w-10" aria-label="Normal"><svg class="size-[13px]" viewBox="0 0 13 13" fill="none" stroke="#555"><path d="M.5.5h12v12H.5zM4.500.5v12M8.500.5v12M.5 4.500h12M.5 8.500h12"/></svg></button>
      <button class="w-10" aria-label="Diseño de página"><svg class="h-[13px] w-[14px]" viewBox="0 0 14 13" fill="none" stroke="#555"><path d="M.5.5h13v12H.5zM3.500 2.500h7v8h-7zM5 4.500h4M5 6.500h4M5 8.500h4"/></svg></button>
      <button class="w-10 bg-[#c6c6c6]" aria-label="Salto de página"><svg class="h-[13px] w-[14px]" viewBox="0 0 14 13" fill="none" stroke="#666"><path d="M.5.5h13v12H.5zM4.500.5v7M8.500.5v7M.5 7.500h8"/></svg></button>
      <button class="w-[19px]" aria-label="Alejar"><svg class="size-2" viewBox="0 0 8 8"><path d="M0 3.500h8" stroke="#333"/></svg></button>
      <input type="range" aria-label="Zoom" min="10" max="190" value="100" class="h-4 w-[100px] appearance-none bg-transparent bg-[linear-gradient(#333,#333)] bg-[length:100%_1px] bg-center bg-no-repeat [&::-webkit-slider-thumb]:h-[11px] [&::-webkit-slider-thumb]:w-[5px] [&::-webkit-slider-thumb]:appearance-none [&::-webkit-slider-thumb]:bg-[#444]">
      <button class="w-[17px]" aria-label="Acercar"><svg class="size-2" viewBox="0 0 8 8"><path d="M0 3.500h7M3.500 0v7" stroke="#333"/></svg></button>
      <span class="w-[44px] pr-2 text-right">100%</span>
    </div>
  </div>
  <div class="flex h-px"><i class="w-12 bg-black"></i><i class="w-[344px] bg-[#dcdcdc]"></i><i class="flex-1 bg-black"></i></div>
</footer>
</body>
</html>
